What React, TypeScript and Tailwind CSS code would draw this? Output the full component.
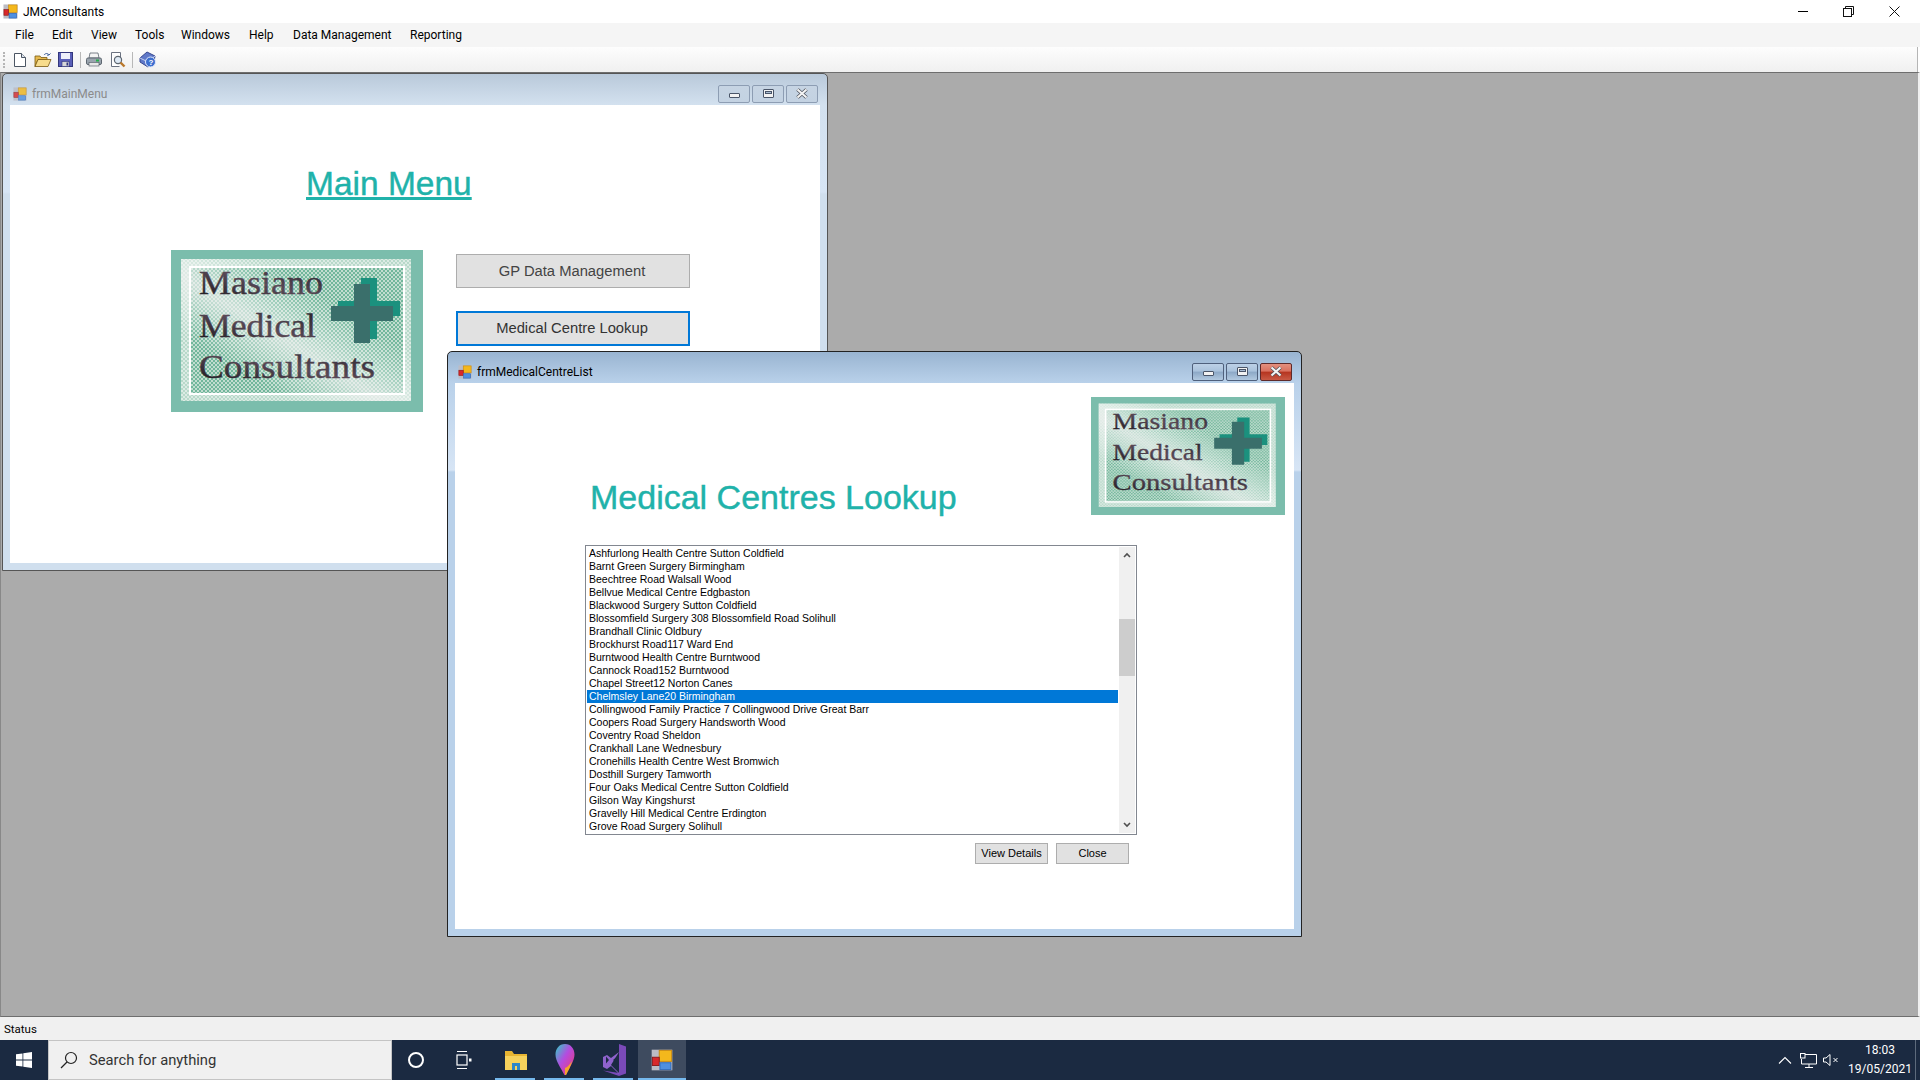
import type { ReactNode } from 'react'

const UI_FONT = "font-['Roboto','Noto_Sans',sans-serif]"

const centres = [
  'Ashfurlong Health Centre Sutton Coldfield',
  'Barnt Green Surgery Birmingham',
  'Beechtree Road Walsall Wood',
  'Bellvue Medical Centre Edgbaston',
  'Blackwood Surgery Sutton Coldfield',
  'Blossomfield Surgery 308 Blossomfield Road Solihull',
  'Brandhall Clinic Oldbury',
  'Brockhurst Road117 Ward End',
  'Burntwood Health Centre Burntwood',
  'Cannock Road152 Burntwood',
  'Chapel Street12 Norton Canes',
  'Chelmsley Lane20 Birmingham',
  'Collingwood Family Practice 7 Collingwood Drive Great Barr',
  'Coopers Road Surgery Handsworth Wood',
  'Coventry Road Sheldon',
  'Crankhall Lane Wednesbury',
  'Cronehills Health Centre West Bromwich',
  'Dosthill Surgery Tamworth',
  'Four Oaks Medical Centre Sutton Coldfield',
  'Gilson Way Kingshurst',
  'Gravelly Hill Medical Centre Erdington',
  'Grove Road Surgery Solihull',
]

const menus = [
  { label: 'File', width: 'w-[37px]' },
  { label: 'Edit', width: 'w-[39px]' },
  { label: 'View', width: 'w-[44px]' },
  { label: 'Tools', width: 'w-[46px]' },
  { label: 'Windows', width: 'w-[68px]' },
  { label: 'Help', width: 'w-[44px]' },
  { label: 'Data Management', width: 'w-[117px]' },
  { label: 'Reporting', width: 'w-[70px]' },
]

function AppIcon({ size = 16, dim = false }: { size?: number; dim?: boolean }) {
  return (
    <svg width={size} height={size} viewBox="0 0 16 16" className={dim ? 'opacity-80' : ''}>
      <rect x="0.5" y="0.5" width="15" height="15" fill="#bcbcc4" />
      <rect x="6" y="1" width="9" height="8" fill="#f4b81c" stroke="#c98a10" strokeWidth="0.7" />
      <rect x="1" y="6" width="5" height="6" fill="#d8282a" stroke="#8e1a1a" strokeWidth="0.7" />
      <rect x="6.5" y="10" width="8" height="5" fill="#4f8fe0" stroke="#2f69b8" strokeWidth="0.7" />
    </svg>
  )
}

function Logo({ prefix, className }: { prefix: string; className: string }) {
  return (
    <svg viewBox="0 0 252 162" preserveAspectRatio="none" className={className}>
      <defs>
        <pattern id={`${prefix}-dots`} width="4" height="4" patternUnits="userSpaceOnUse">
          <rect width="4" height="4" fill="#c2ddd0" />
          <circle cx="1" cy="1" r="0.95" fill="#4fa685" />
          <circle cx="3" cy="3" r="0.95" fill="#4fa685" />
        </pattern>
        <pattern id={`${prefix}-light`} width="4" height="4" patternUnits="userSpaceOnUse">
          <rect width="4" height="4" fill="#dcebe4" />
          <circle cx="1" cy="1" r="0.9" fill="#a6d0bd" />
          <circle cx="3" cy="3" r="0.9" fill="#a6d0bd" />
        </pattern>
        <linearGradient id={`${prefix}-shine`} x1="0" y1="1" x2="1" y2="0">
          <stop offset="0.24" stopColor="#fff" stopOpacity="0" />
          <stop offset="0.44" stopColor="#f2f2f2" stopOpacity="0.7" />
          <stop offset="0.56" stopColor="#fff" stopOpacity="0.3" />
          <stop offset="0.68" stopColor="#fff" stopOpacity="0" />
        </linearGradient>
        <linearGradient id={`${prefix}-ink`} x1="0" y1="1" x2="1" y2="0">
          <stop offset="0" stopColor="#17141a" />
          <stop offset="0.5" stopColor="#5a4a57" />
          <stop offset="1" stopColor="#241f28" />
        </linearGradient>
      </defs>
      <rect width="252" height="162" fill="#7bbdac" />
      <rect x="10" y="9" width="230" height="142" fill={`url(#${prefix}-light)`} />
      <rect x="19" y="17" width="214" height="127" fill={`url(#${prefix}-dots)`} />
      <rect x="10" y="9" width="230" height="142" fill={`url(#${prefix}-shine)`} />
      <rect x="19" y="17" width="214" height="127" fill="none" stroke="#fff" strokeWidth="2" />
      <path d="M190 28h16v23h23v15h-23v23h-16v-23h-23v-15h23z" fill="#1b917e" />
      <path d="M183 34h16v22h23v15h-23v22h-16v-22h-23v-15h23z" fill="#3a6f6b" />
      <g
        fontFamily="'Liberation Serif', serif"
        fontSize="33"
        fill={`url(#${prefix}-ink)`}
        stroke={`url(#${prefix}-ink)`}
        strokeWidth="0.4"
      >
        <text x="28" y="44" textLength="124" lengthAdjust="spacingAndGlyphs">Masiano</text>
        <text x="28" y="87" textLength="117" lengthAdjust="spacingAndGlyphs">Medical</text>
        <text x="28" y="128" textLength="176" lengthAdjust="spacingAndGlyphs">Consultants</text>
      </g>
    </svg>
  )
}

function CaptionButton({ kind, active, close }: { kind: 'min' | 'max' | 'close'; active: boolean; close?: boolean }) {
  const base = close
    ? 'border-[#5e2a2a] bg-[linear-gradient(#e3907f_0%,#d9715f_45%,#b5341f_50%,#c85a45_100%)]'
    : active
      ? 'border-[#4f607c] bg-[linear-gradient(#bcd0e6_0%,#a9c2dc_45%,#8ca8c6_50%,#b2c9e0_100%)]'
      : 'border-[#8d9db3] bg-[linear-gradient(#c6d4e3_0%,#c3d2e2_100%)]'
  return (
    <div className={`flex h-[18px] w-[32px] items-center justify-center rounded-[2px] border ${base}`}>
      {kind === 'min' && <div className="mt-[3px] h-[5px] w-[11px] rounded-[1px] border border-[#4a5568] bg-[#f2f2f2]" />}
      {kind === 'max' && (
        <div className="h-[9px] w-[11px] rounded-[1px] border border-[#4a5568] bg-[#f2f2f2] p-[1px]">
          <div className="h-[3px] w-full border border-[#4a5568] bg-[#a9bdd3]" />
        </div>
      )}
      {kind === 'close' && (
        <svg width="14" height="11" viewBox="0 0 14 11">
          <path d="M2.5 1.5l9 8M11.5 1.5l-9 8" stroke="#4a4f58" strokeWidth="3.6" />
          <path d="M2.5 1.5l9 8M11.5 1.5l-9 8" stroke="#f4f4f4" strokeWidth="2.2" />
        </svg>
      )}
    </div>
  )
}

function MdiWindow({
  title,
  active,
  className,
  children,
}: {
  title: string
  active: boolean
  className: string
  children: ReactNode
}) {
  const frame = active
    ? 'border-[#222] bg-[linear-gradient(#99b4d1_0px,#b9d1ea_31px,#d7e5f5_118px,#b9d1ea_120px)]'
    : 'border-[#555] bg-[linear-gradient(#b9c9da_0px,#d3e1ef_31px,#d7e5f5_118px,#d0dfee_120px)]'
  return (
    <div className={`absolute flex flex-col rounded-t-[5px] border ${frame} ${className}`}>
      <div className="flex h-[31px] shrink-0 items-center pl-[10px] pr-[9px] pt-[8px]">
        <AppIcon size={14} dim={!active} />
        <span className={`ml-[5px] text-[12px] ${UI_FONT} ${active ? 'text-black' : 'text-[#8b8b8b]'}`}>{title}</span>
        <div className="ml-auto flex gap-[2px]">
          <CaptionButton kind="min" active={active} />
          <CaptionButton kind="max" active={active} />
          <CaptionButton kind="close" active={active} close={active} />
        </div>
      </div>
      <div className="mx-[7px] mb-[7px] min-h-0 flex-1 bg-white">{children}</div>
    </div>
  )
}

function Toolbar() {
  return (
    <div className="mr-[2px] flex h-[25px] items-center border-r border-r-[#b5b5b5] bg-[linear-gradient(#fdfdfd,#f0f0f0)] pl-[3px]">
      <div className="h-[16px] w-[2px] border-l-2 border-dotted border-[#b5b5b5]" />
      <svg width="16" height="16" viewBox="0 0 16 16" className="ml-[7px]">
        <path d="M2.5 1.5h7l4 4v9h-11z" fill="#fff" stroke="#4b5563" />
        <path d="M9.5 1.5v4h4" fill="#dde4ee" stroke="#4b5563" />
      </svg>
      <svg width="18" height="16" viewBox="0 0 18 16" className="ml-[6px]">
        <path d="M1 4h5l1 1.500h6v2H4l-3 7z" fill="#e6b94e" stroke="#7a5a12" strokeWidth="0.8" />
        <path d="M4 7.500h13l-3 7H1z" fill="#f7dc8c" stroke="#7a5a12" strokeWidth="0.8" />
        <path d="M10 3c1.500-2 4-2 5 0M15 3l1.500-1.500M15 3l-2 .2" fill="none" stroke="#3d5f99" />
      </svg>
      <svg width="15" height="15" viewBox="0 0 15 15" className="ml-[6px]">
        <rect x="0.5" y="0.500" width="14" height="14" fill="#5a5fb8" stroke="#33377d" />
        <rect x="3" y="1" width="9" height="6" fill="#eef0fb" />
        <rect x="4" y="9.500" width="7" height="5" fill="#d8d8d8" stroke="#33377d" strokeWidth="0.6" />
        <rect x="8.500" y="10.500" width="1.500" height="3" fill="#33377d" />
      </svg>
      <div className="ml-[7px] h-[16px] w-px bg-[#b8b8b8]" />
      <svg width="16" height="15" viewBox="0 0 16 15" className="ml-[5px]">
        <path d="M4 1h8l1 5H3z" fill="#f4f4f4" stroke="#5d6670" strokeWidth="0.8" />
        <rect x="0.500" y="6" width="15" height="6.500" rx="1.500" fill="#9aa4ae" stroke="#5d6670" />
        <rect x="3" y="10.500" width="10" height="3.500" fill="#e8e8e8" stroke="#5d6670" strokeWidth="0.7" />
        <rect x="10" y="7.500" width="3" height="2" fill="#25b04a" />
      </svg>
      <svg width="16" height="16" viewBox="0 0 16 16" className="ml-[8px]">
        <path d="M1.500 .500h9v6M1.500 .500v14h8" fill="#fff" stroke="#6b7280" />
        <circle cx="8" cy="8" r="3.600" fill="#dfeaf5" stroke="#5d6670" strokeWidth="1.200" />
        <path d="M10.500 10.500l4 4" stroke="#b9772a" strokeWidth="2.400" />
      </svg>
      <div className="ml-[6px] h-[16px] w-px bg-[#b8b8b8]" />
      <svg width="18" height="17" viewBox="0 0 18 17" className="ml-[6px]">
        <path d="M1 7l7-6 8 4-1 6-6 5-8-5z" fill="#5f78c8" stroke="#36478f" />
        <path d="M1 7l8 4 7-6" fill="none" stroke="#c5d0ee" />
        <circle cx="11.500" cy="11" r="5" fill="#3d6fd0" stroke="#dfe8fa" />
        <text x="9.500" y="14" fontSize="8" fontWeight="700" fill="#fff" fontFamily="'Liberation Sans', sans-serif">?</text>
      </svg>
    </div>
  )
}

function ListBox() {
  return (
    <div className="ml-[130px] mt-[28px] flex h-[290px] w-[552px] border border-[#828790] bg-white p-[1px]">
      <div className="min-w-0 flex-1 overflow-hidden">
        {centres.map((name, i) => (
          <div
            key={name}
            className={`h-[13px] whitespace-nowrap pl-[2px] text-[10.5px] leading-[13px] font-['Liberation_Sans',sans-serif] ${
              i === 11 ? 'bg-[#0078d7] text-white' : 'text-black'
            }`}
          >
            {name}
          </div>
        ))}
      </div>
      <div className="ml-px flex w-[16px] shrink-0 flex-col bg-[#f0f0f0]">
        <div className="flex h-[16px] items-center justify-center">
          <svg width="8" height="6" viewBox="0 0 8 6"><path d="M1 5l3-3 3 3" fill="none" stroke="#505050" strokeWidth="1.600" /></svg>
        </div>
        <div className="mt-[56px] h-[57px] bg-[#cdcdcd]" />
        <div className="flex-1" />
        <div className="flex h-[16px] items-center justify-center">
          <svg width="8" height="6" viewBox="0 0 8 6"><path d="M1 1l3 3 3-3" fill="none" stroke="#505050" strokeWidth="1.600" /></svg>
        </div>
      </div>
    </div>
  )
}

function Taskbar() {
  return (
    <div className="flex h-[40px] shrink-0 items-stretch bg-[#1b2a41] text-white">
      <div className="flex w-[48px] items-center justify-center">
        <svg width="16" height="16" viewBox="0 0 16 16" fill="#fff">
          <path d="M0 2.300l6.500-.9v6.200H0zM7.300 1.300L16 0v7.600H7.300zM0 8.400h6.500v6.200L0 13.700zM7.300 8.400H16V16l-8.700-1.300z" />
        </svg>
      </div>
      <div className={`flex w-[344px] items-center border border-[#c4c4c4] bg-[#f0f0f0] pl-[11px] text-[14.75px] text-[#333] ${UI_FONT}`}>
        <svg width="18" height="18" viewBox="0 0 18 18" fill="none" stroke="#222" strokeWidth="1.200">
          <circle cx="11" cy="7" r="5.500" />
          <path d="M7 11l-6 6" />
        </svg>
        <span className="ml-[11px]">Search for anything</span>
      </div>
      <div className="flex w-[48px] items-center justify-center">
        <div className="h-[16px] w-[16px] rounded-full border-[2.500px] border-white" />
      </div>
      <div className="mr-[3px] flex w-[48px] items-center justify-center">
        <svg width="16" height="20" viewBox="0 0 16 20" fill="none" stroke="#fff" strokeWidth="1.200">
          <path d="M1 1.500h10M1 18.500h10" />
          <rect x="1" y="5" width="10" height="10" />
          <rect x="13" y="8.500" width="2.500" height="3" fill="#fff" stroke="none" />
        </svg>
      </div>
      <div className="relative flex w-[49px] items-center justify-center">
        <svg width="22" height="22" viewBox="0 0 22 22">
          <path d="M0 2h7l2 3h13v3H0z" fill="#e8b532" />
          <path d="M0 7h22v14H0z" fill="#f7d25c" />
          <path d="M7 21v-7h8v7h-3v-4h-2v4z" fill="#2e86c9" />
        </svg>
        <div className="absolute bottom-0 left-[4px] h-[2px] w-[40px] bg-[#76b9ed]" />
      </div>
      <div className="relative flex w-[49px] items-center justify-center">
        <svg width="20" height="32" viewBox="0 0 20 32">
          <defs>
            <linearGradient id="paint-drop" x1="0" y1="0" x2="1" y2="1">
              <stop offset="0" stopColor="#29d3c4" />
              <stop offset="0.45" stopColor="#b44be0" />
              <stop offset="1" stopColor="#f2396a" />
            </linearGradient>
          </defs>
          <path d="M10 0c6 0 9.500 5 9.500 10.500 0 6-5 13-8.500 20.500h-1.500C6 24 .5 17 .5 10.500.5 5 4 0 10 0z" fill="url(#paint-drop)" />
          <path d="M10 24c3-1 5-4 7-7-1 5-4 10-6 14h-1z" fill="#f4a62a" />
        </svg>
        <div className="absolute bottom-0 left-[4px] h-[2px] w-[40px] bg-[#76b9ed]" />
      </div>
      <div className="relative flex w-[49px] items-center justify-center">
        <svg width="24" height="32" viewBox="0 0 24 32">
          <path d="M17 0l7 2.500v27L17 32 1 26.500 17 29z" fill="#7a4ab8" />
          <path d="M17 0v29l-8-8 8-13-8 6-4-3-4 2v10l4 2 4-3 8 8V0z" fill="#8f63cc" />
          <path d="M4 12.500l3 3.500-3 3.500zM11 16l6-5v10z" fill="#1b2a41" />
        </svg>
        <div className="absolute bottom-0 left-[4px] h-[2px] w-[40px] bg-[#76b9ed]" />
      </div>
      <div className="relative flex w-[48px] items-center justify-center bg-[#3e4b5f]">
        <AppIcon size={22} />
        <div className="absolute bottom-0 left-0 h-[2px] w-full bg-[#76b9ed]" />
      </div>
      <div className="ml-auto flex items-center">
        <svg width="14" height="8" viewBox="0 0 14 8" fill="none" stroke="#fff" strokeWidth="1.100"><path d="M1 7.500l6-6 6 6" /></svg>
        <svg width="17" height="15" viewBox="0 0 17 15" fill="none" stroke="#fff" className="ml-[8px]">
          <path d="M4 1.500h12.500v9.500H1.500V6M9 11v3M5 14.500h8" />
          <rect x="0.500" y="0.500" width="4.500" height="4.500" fill="#1b2a41" />
        </svg>
        <svg width="17" height="12" viewBox="0 0 17 12" fill="none" stroke="#fff" className="ml-[6px]">
          <path d="M.500 4h2.500l4-3.500v11L3 8H.500zM10.500 4l4 4M14.500 4l-4 4" />
        </svg>
        <div className={`ml-[5px] w-[70px] text-center text-[12px] leading-[19px] ${UI_FONT}`}>
          <div>18:03</div>
          <div>19/05/2021</div>
        </div>
        <div className="mr-[4px] h-full w-px bg-[#5d6a7c]" />
      </div>
    </div>
  )
}

export default function App() {
  return (
    <div className={`flex h-screen w-[1920px] flex-col overflow-hidden bg-white text-[12px] ${UI_FONT}`}>
      <div className="flex h-[23px] shrink-0 items-center pl-[3px]">
        <AppIcon size={15} />
        <span className="ml-[5px]">JMConsultants</span>
        <div className="ml-auto flex items-center pr-[20px]">
          <div className="h-px w-[10px] bg-black" />
          <svg width="11" height="11" viewBox="0 0 11 11" fill="none" stroke="#111" className="ml-[35px]">
            <rect x="0.500" y="2.500" width="8" height="8" />
            <path d="M2.500 2.500v-2h8v8h-2" />
          </svg>
          <svg width="11" height="11" viewBox="0 0 11 11" fill="none" stroke="#111" className="ml-[35px]">
            <path d="M.5.5l10 10M10.500.5l-10 10" />
          </svg>
        </div>
      </div>
      <div className="flex h-[24px] shrink-0 items-center bg-[#f5f5f5] pl-[15px]">
        {menus.map((m) => (
          <span key={m.label} className={`${m.width} whitespace-nowrap`}>{m.label}</span>
        ))}
      </div>
      <Toolbar />
      <div className="relative min-h-0 flex-1 border-y border-y-[#6e6e6e] border-l border-l-[#888] border-r-2 border-r-[#f0f0f0] bg-[#ababab]">
        <MdiWindow title="frmMainMenu" active={false} className="left-[1px] top-0 h-[498px] w-[826px]">
          <h1 className="pl-[296px] pt-[55px] text-[33.5px] leading-[48px] text-[#20b2aa] underline font-['Liberation_Sans',sans-serif] [-webkit-text-stroke:0.4px_#20b2aa]">
            Main Menu
          </h1>
          <div className="ml-[161px] mt-[42px] flex gap-[33px] font-['Liberation_Sans',sans-serif] text-[14.75px]">
            <Logo prefix="main" className="h-[162px] w-[252px]" />
            <div className="flex flex-col gap-[23px] pt-[4px]">
              <button className="h-[34px] w-[234px] border border-[#adadad] bg-[#e1e1e1] pr-[2px] text-[#444]">GP Data Management</button>
              <button className="h-[35px] w-[234px] border-2 border-[#0078d7] bg-[#e1e1e1] pr-[2px] text-[#333]">Medical Centre Lookup</button>
            </div>
          </div>
        </MdiWindow>
        <MdiWindow title="frmMedicalCentreList" active className="left-[446px] top-[278px] h-[586px] w-[855px]">
          <div className="flex items-start justify-between pr-[9px] pt-[14px]">
            <h2 className="ml-[135px] mt-[80px] text-[34px] leading-[40px] text-[#20b2aa] font-['Liberation_Sans',sans-serif] [-webkit-text-stroke:0.4px_#20b2aa]">
              Medical Centres Lookup
            </h2>
            <Logo prefix="list" className="h-[118px] w-[194px]" />
          </div>
          <ListBox />
          <div className="ml-[520px] mt-[8px] flex gap-[8px] font-['Liberation_Sans',sans-serif] text-[11px]">
            <button className="h-[21px] w-[73px] border border-[#adadad] bg-[#e1e1e1]">View Details</button>
            <button className="h-[21px] w-[73px] border border-[#adadad] bg-[#e1e1e1]">Close</button>
          </div>
        </MdiWindow>
      </div>
      <div className="flex h-[23px] shrink-0 items-center bg-[#f0f0f0] pl-[4px] pt-[2px] text-[11.500px]">Status</div>
      <Taskbar />
    </div>
  )
}
